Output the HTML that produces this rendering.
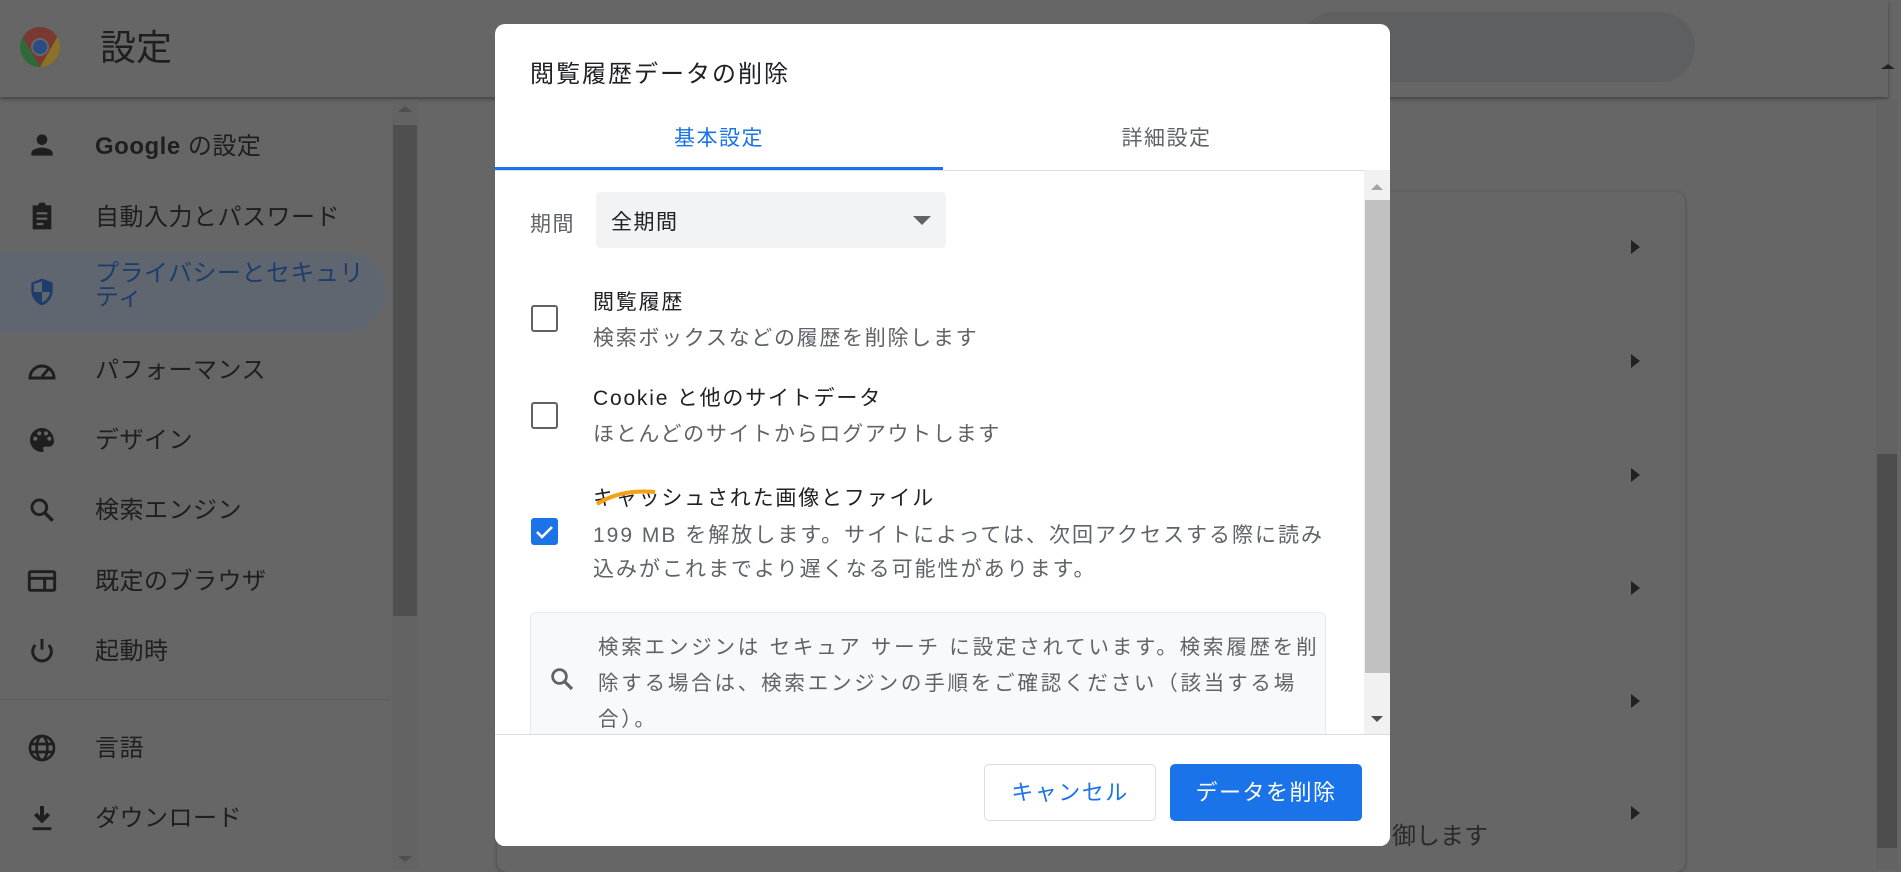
<!DOCTYPE html>
<html><head><meta charset="utf-8"><style>
*{margin:0;padding:0;box-sizing:border-box}
body{width:1901px;height:870px;overflow:hidden;background:#666;font-family:"Liberation Sans","Noto Sans CJK JP",sans-serif;position:relative}
.a{position:absolute}
.hdr{left:0;top:0;width:1888px;height:97px;background:#666;box-shadow:0 2px 4px rgba(0,0,0,.35)}
.side{color:#1f1f1f;font-size:24px;white-space:nowrap;letter-spacing:.5px}
.ic{left:26px;width:32px;height:32px}
.dlg{left:495px;top:24px;width:895px;height:822px;background:#fff;border-radius:10px;overflow:hidden}
.t{color:#202124;font-size:21px;white-space:nowrap;letter-spacing:1.8px}
.s{color:#5f6368;font-size:21px;white-space:nowrap;letter-spacing:1.7px}
.cb{left:36px;width:27px;height:27px;border:2.5px solid #5f6368;border-radius:3px}
.chev{width:0;height:0;border-left:9px solid #222;border-top:7px solid transparent;border-bottom:7px solid transparent}
</style></head><body>
<div class="a hdr"></div>
<svg class="a" style="left:19px;top:26px" width="42" height="42" viewBox="0 0 42 42">
<circle cx="21" cy="21" r="20" fill="#7a3a33"/>
<path d="M38.3 11 A20 20 0 0 1 21 41 L29.7 26Z" fill="#8a7327"/>
<path d="M21 41 A20 20 0 0 1 3.7 11 L12.3 26Z" fill="#2f6b3a"/>
<circle cx="21" cy="21" r="9" fill="#666"/><circle cx="21" cy="21" r="7" fill="#2a4d86"/>
</svg>
<div class="a" style="left:100px;top:19px;font-size:36px;color:#1f1f1f">設定</div>
<div class="a" style="left:1300px;top:12px;width:395px;height:70px;border-radius:35px;background:#5e5f61"></div>

<div class="a" style="left:0;top:251px;width:386px;height:82px;background:#5f666f;border-radius:0 41px 41px 0"></div>
<svg class="a ic" style="top:129px" viewBox="0 0 24 24"><circle cx="12" cy="8" r="4" fill="#1f1f1f"/><path d="M4 20v-2c0-2.7 5.3-4 8-4s8 1.3 8 4v2z" fill="#1f1f1f"/></svg>
<div class="a side" style="left:95px;top:126px;font-weight:bold">Google <span style="font-weight:normal">の設定</span></div>
<svg class="a ic" style="top:200px" viewBox="0 0 24 24"><path d="M5 4h4l1-2h4l1 2h4v18H5z" fill="#1f1f1f"/><path d="M8 10h8M8 14h8M8 18h5" stroke="#666" stroke-width="1.6"/></svg>
<div class="a side" style="left:95px;top:197px">自動入力とパスワード</div>
<svg class="a ic" style="top:276px" viewBox="0 0 24 24"><path d="M12 2l8 3v6c0 5-3.4 9.5-8 11-4.6-1.5-8-6-8-11V5z" fill="#1f3d6b"/><path d="M12 4v8H6V6zM12 12h6c-.5 3.6-3 6.7-6 7.8z" fill="#5f666f"/></svg>
<div class="a side" style="left:95px;top:262px;line-height:24px;color:#1f3d6b">プライバシーとセキュリ<br>ティ</div>
<svg class="a ic" style="top:354px" viewBox="0 0 24 24"><path d="M3 18a9 9 0 0 1 18 0z" fill="none" stroke="#1f1f1f" stroke-width="2.2"/><path d="M12 17l5-6" stroke="#1f1f1f" stroke-width="2.2"/></svg>
<div class="a side" style="left:95px;top:350px">パフォーマンス</div>
<svg class="a ic" style="top:424px" viewBox="0 0 24 24"><path d="M12 3a9 9 0 0 0 0 18c1.5 0 1.5-1 1-2s0-2 1.5-2H17a4 4 0 0 0 4-4c0-5.5-4-10-9-10z" fill="#1f1f1f"/><circle cx="7" cy="11" r="1.5" fill="#666"/><circle cx="10" cy="7" r="1.5" fill="#666"/><circle cx="15" cy="7" r="1.5" fill="#666"/><circle cx="17.5" cy="11" r="1.5" fill="#666"/></svg>
<div class="a side" style="left:95px;top:420px">デザイン</div>
<svg class="a ic" style="top:494px" viewBox="0 0 24 24"><circle cx="10" cy="10" r="5.5" fill="none" stroke="#1f1f1f" stroke-width="2.2"/><path d="M14 14l6 6" stroke="#1f1f1f" stroke-width="2.6"/></svg>
<div class="a side" style="left:95px;top:490px">検索エンジン</div>
<svg class="a ic" style="top:565px" viewBox="0 0 24 24"><rect x="2.5" y="5" width="19" height="14" rx="1" fill="none" stroke="#1f1f1f" stroke-width="2.2"/><path d="M3 10h18M14 10v9" stroke="#1f1f1f" stroke-width="2.2"/></svg>
<div class="a side" style="left:95px;top:561px">既定のブラウザ</div>
<svg class="a ic" style="top:635px" viewBox="0 0 24 24"><path d="M7 7.5a7 7 0 1 0 10 0" fill="none" stroke="#1f1f1f" stroke-width="2.2"/><path d="M12 3v8" stroke="#1f1f1f" stroke-width="2.2"/></svg>
<div class="a side" style="left:95px;top:631px">起動時</div>
<div class="a" style="left:0;top:699px;width:390px;height:1px;background:#5c5c5c"></div>
<svg class="a ic" style="top:732px" viewBox="0 0 24 24"><circle cx="12" cy="12" r="9" fill="none" stroke="#1f1f1f" stroke-width="2"/><ellipse cx="12" cy="12" rx="4" ry="9" fill="none" stroke="#1f1f1f" stroke-width="2"/><path d="M3 9h18M3 15h18" stroke="#1f1f1f" stroke-width="2"/></svg>
<div class="a side" style="left:95px;top:728px">言語</div>
<svg class="a ic" style="top:802px" viewBox="0 0 24 24"><path d="M12 3v10M7 9l5 5 5-5" fill="none" stroke="#1f1f1f" stroke-width="3"/><path d="M5 20h14" stroke="#1f1f1f" stroke-width="2.2"/></svg>
<div class="a side" style="left:95px;top:798px">ダウンロード</div>
<div class="a" style="left:392px;top:100px;width:26px;height:770px;background:#636363"></div>
<div class="a" style="left:393px;top:125px;width:24px;height:491px;background:#4f4f4f"></div>
<div class="a" style="left:398px;top:106px;border-left:7px solid transparent;border-right:7px solid transparent;border-bottom:6px solid #4f4f4f"></div>
<div class="a" style="left:398px;top:856px;border-left:7px solid transparent;border-right:7px solid transparent;border-top:6px solid #4f4f4f"></div>

<div class="a" style="left:497px;top:192px;width:1188px;height:680px;background:#666;border-radius:10px;box-shadow:0 1px 4px rgba(0,0,0,.3)"></div>
<div class="a chev" style="left:1631px;top:240px"></div>
<div class="a chev" style="left:1631px;top:354px"></div>
<div class="a chev" style="left:1631px;top:468px"></div>
<div class="a chev" style="left:1631px;top:581px"></div>
<div class="a chev" style="left:1631px;top:694px"></div>
<div class="a chev" style="left:1631px;top:806px"></div>
<div class="a" style="left:1392px;top:816px;font-size:24px;color:#2a2a2a">御します</div>
<div class="a" style="left:1876px;top:100px;width:22px;height:770px;background:#636363"></div>
<div class="a" style="left:1877px;top:454px;width:20px;height:394px;background:#4d4d4d"></div>
<div class="a" style="left:1881px;top:64px;border-left:7px solid transparent;border-right:7px solid transparent;border-bottom:5px solid #222"></div>

<div class="a dlg">
 <div class="a" style="left:35px;top:30px;font-size:24px;color:#202124;letter-spacing:2px">閲覧履歴データの削除</div>
 <div class="a" style="left:0;top:98px;width:448px;text-align:center;font-size:21px;color:#1a73e8;letter-spacing:1.5px">基本設定</div>
 <div class="a" style="left:448px;top:98px;width:447px;text-align:center;font-size:21px;color:#5f6368;letter-spacing:1.5px">詳細設定</div>
 <div class="a" style="left:0;top:146px;width:895px;height:1px;background:#dadce0"></div>
 <div class="a" style="left:0;top:143px;width:448px;height:3px;background:#1a73e8"></div>
 <div class="a" style="left:35px;top:184px;font-size:21px;color:#5f6368;letter-spacing:1.5px">期間</div>
 <div class="a" style="left:101px;top:168px;width:350px;height:56px;background:#f1f3f4;border-radius:4px"></div>
 <div class="a" style="left:116px;top:182px;font-size:21px;color:#202124;letter-spacing:1.5px">全期間</div>
 <div class="a" style="left:418px;top:192px;border-left:9px solid transparent;border-right:9px solid transparent;border-top:9px solid #5f6368"></div>

 <div class="a cb" style="top:281px"></div>
 <div class="a t" style="left:98px;top:262px">閲覧履歴</div>
 <div class="a s" style="left:98px;top:298px">検索ボックスなどの履歴を削除します</div>
 <div class="a cb" style="top:378px"></div>
 <div class="a t" style="left:98px;top:358px">Cookie と他のサイトデータ</div>
 <div class="a s" style="left:98px;top:394px">ほとんどのサイトからログアウトします</div>
 <div class="a" style="left:36px;top:494px;width:27px;height:27px;background:#1a73e8;border-radius:3px"></div>
 <svg class="a" style="left:36px;top:494px" width="27" height="27" viewBox="0 0 27 27"><path d="M6 14l5 5 10-10" fill="none" stroke="#fff" stroke-width="2.6"/></svg>
 <div class="a t" style="left:98px;top:458px">キャッシュされた画像とファイル</div>
 <svg class="a" style="left:98px;top:458px" width="70" height="30"><path d="M4 22 C20 12 40 8 62 10" fill="none" stroke="#f4a012" stroke-width="4"/></svg>
 <div class="a s" style="left:98px;top:495px;line-height:34px;letter-spacing:2px">199 MB を解放します。サイトによっては、次回アクセスする際に読み<br>込みがこれまでより遅くなる可能性があります。</div>

 <div class="a" style="left:35px;top:588px;width:796px;height:140px;background:#f8f9fa;border:1px solid #e8eaed;border-radius:6px"></div>
 <svg class="a" style="left:52px;top:640px" width="30" height="30" viewBox="0 0 24 24"><circle cx="10" cy="10" r="5.5" fill="none" stroke="#5f6368" stroke-width="2.2"/><path d="M14 14l6 6" stroke="#5f6368" stroke-width="2.6"/></svg>
 <div class="a s" style="left:103px;top:606px;line-height:36px;font-size:20.5px;letter-spacing:2.8px">検索エンジンは セキュア サーチ に設定されています。検索履歴を削<br>除する場合は、検索エンジンの手順をご確認ください（該当する場<br>合）。</div>

 <div class="a" style="left:869px;top:146px;width:26px;height:565px;background:#f1f1f1"></div>
 <div class="a" style="left:870px;top:176px;width:25px;height:473px;background:#c1c1c1"></div>
 <div class="a" style="left:876px;top:160px;border-left:6px solid transparent;border-right:6px solid transparent;border-bottom:6px solid #a3a3a3"></div>
 <div class="a" style="left:876px;top:692px;border-left:6px solid transparent;border-right:6px solid transparent;border-top:6px solid #505050"></div>

 <div class="a" style="left:0;top:710px;width:895px;height:112px;background:#fff;border-top:1px solid #dadce0"></div>
 <div class="a" style="left:489px;top:740px;width:172px;height:57px;border:1px solid #dadce0;border-radius:5px;color:#1a73e8;font-size:22px;text-align:center;line-height:55px;letter-spacing:1.5px">キャンセル</div>
 <div class="a" style="left:675px;top:740px;width:192px;height:57px;background:#1a73e8;border-radius:5px;color:#fff;font-size:22px;text-align:center;line-height:57px;letter-spacing:1.5px">データを削除</div>
</div>
</body></html>
